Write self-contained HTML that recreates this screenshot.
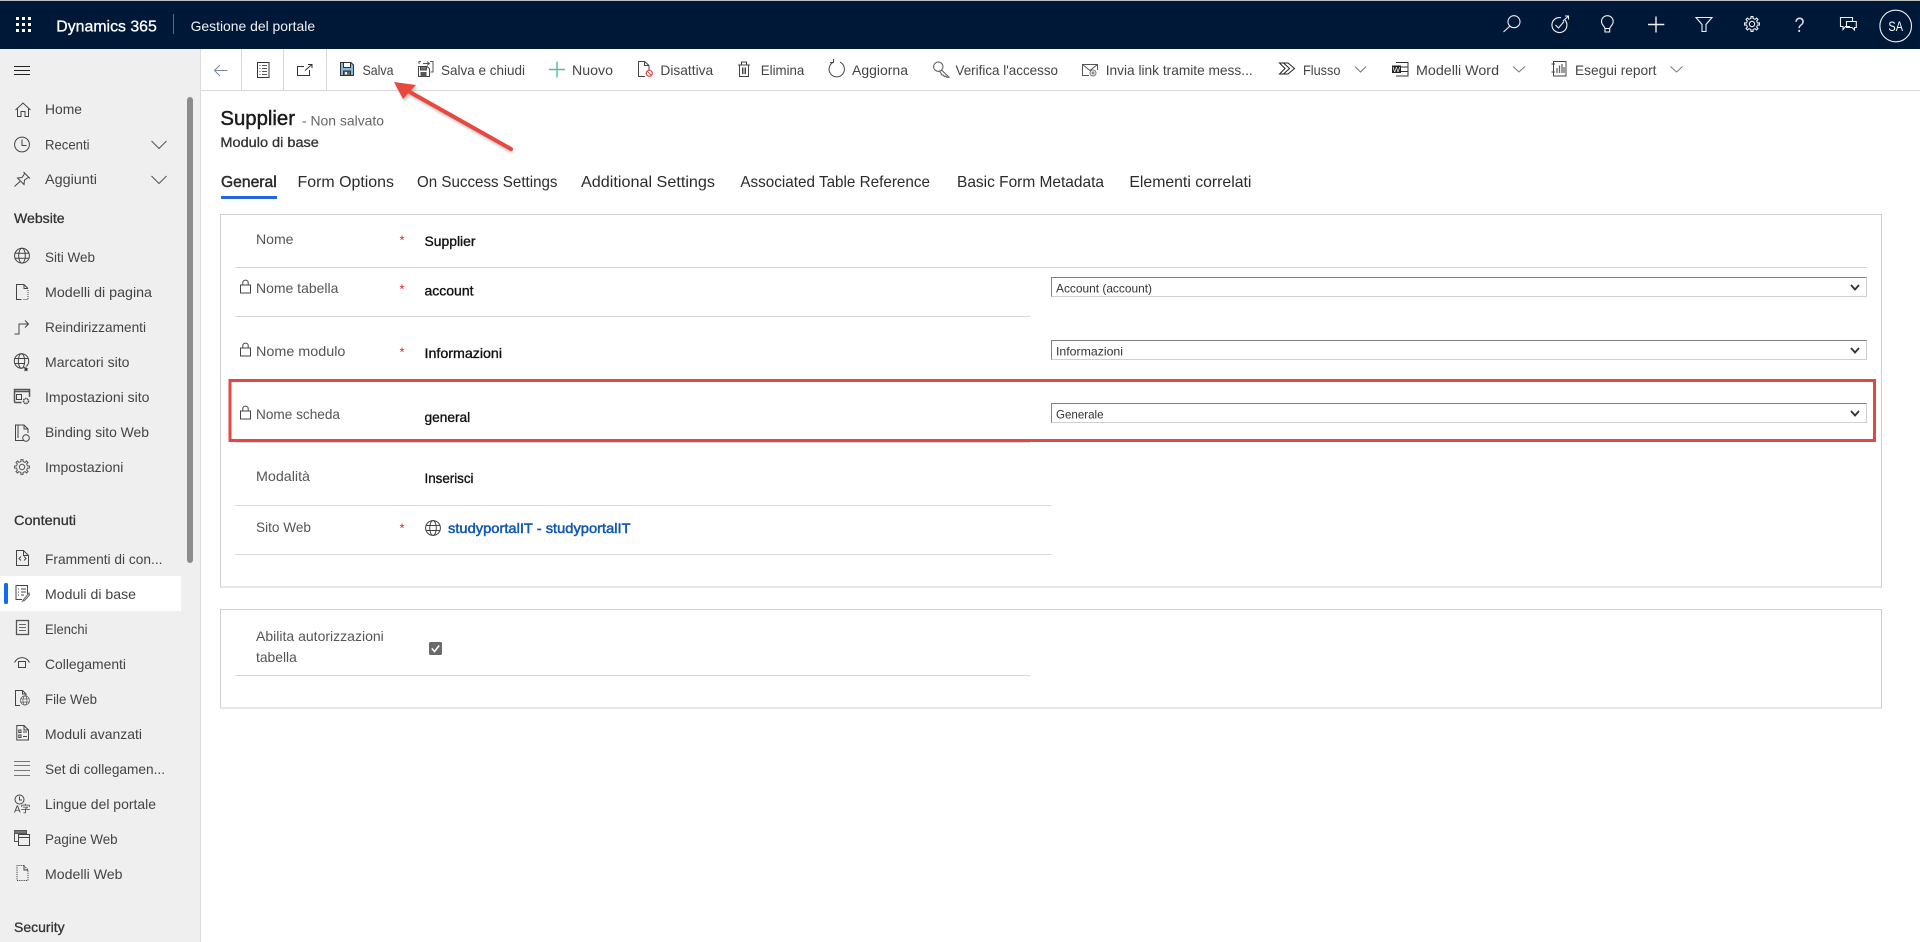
<!DOCTYPE html>
<html lang="it"><head><meta charset="utf-8"><title>Gestione del portale</title>
<style>
html,body{margin:0;padding:0;background:#fff;overflow:hidden}
svg{display:block}
text{font-family:"Liberation Sans",Arial,sans-serif;font-size:14px;fill:#3a3a3a}
.sb{stroke:currentColor;stroke-width:.3px}
.nav text{fill:#444}
.sec{fill:#333;color:#333;stroke:#333;stroke-width:.3px}
.tool text{fill:#444}
.tab{font-size:16px;fill:#2b2b2b}
.lab{fill:#555}
.val{fill:#111;color:#111;stroke:#111;stroke-width:.35px}
.sel{font-size:12px;fill:#333}
.star{fill:#e0202a;font-size:13px}
.i{fill:none;stroke:#444;stroke-width:1}
.w{fill:none;stroke:#f0f0f0;stroke-width:1.1}
</style></head><body>
<svg width="1920" height="942" viewBox="0 0 1920 942" xmlns="http://www.w3.org/2000/svg">
<defs>
<filter id="b" x="-20%" y="-20%" width="140%" height="140%"><feGaussianBlur stdDeviation="1.2"/></filter>
<path id="t" d="M5.9 2.92L6.93 2.5L6.96.57H9.04L9.07 2.5L10.1 2.92"/>
<g id="gear"><use href="#t"/><use href="#t" transform="rotate(45 8 8)"/><use href="#t" transform="rotate(90 8 8)"/><use href="#t" transform="rotate(135 8 8)"/><use href="#t" transform="rotate(180 8 8)"/><use href="#t" transform="rotate(225 8 8)"/><use href="#t" transform="rotate(270 8 8)"/><use href="#t" transform="rotate(315 8 8)"/><circle cx="8" cy="8" r="2.7"/></g>
<g id="globe"><circle cx="8" cy="8" r="7.4"/><ellipse cx="8" cy="8" rx="3.3" ry="7.4"/><path d="M.8 5.5H15.2M.8 10.5H15.2"/></g>
<path id="lock" d="M.5 5.5H10.5V13.5H.5ZM2.8 5.5V3.2C2.8-.2 8.2-.2 8.2 3.2V5.5"/>
</defs>

<!-- backgrounds -->
<rect width="1920" height="942" fill="#fff"/>
<rect y="0" width="1920" height="1" fill="#bdbdbd"/>
<rect y="1" width="1920" height="48" fill="#001838"/>
<rect y="49" width="200" height="893" fill="#efefef"/>
<rect x="200" y="49" width="1" height="893" fill="#dcdcdc"/>
<rect x="201" y="90" width="1719" height="1" fill="#d8d8d8"/>
<rect x="241" y="49" width="1" height="41" fill="#d8d8d8"/><rect x="283" y="49" width="1" height="41" fill="#d8d8d8"/><rect x="326" y="49" width="1" height="41" fill="#d8d8d8"/>

<!-- header -->
<g fill="#fff"><rect x="16" y="17" width="3" height="3"/><rect x="22" y="17" width="3" height="3"/><rect x="28" y="17" width="3" height="3"/><rect x="16" y="23" width="3" height="3"/><rect x="22" y="23" width="3" height="3"/><rect x="28" y="23" width="3" height="3"/><rect x="16" y="29" width="3" height="3"/><rect x="22" y="29" width="3" height="3"/><rect x="28" y="29" width="3" height="3"/></g>
<text x="56.3" y="31.5" font-size="16" style="font-size:16px;fill:#fff;color:#fff" class="sb" textLength="100.5" lengthAdjust="spacingAndGlyphs">Dynamics 365</text>
<rect x="173" y="14" width="1" height="20" fill="#5a6a80"/>
<text x="190.6" y="31" style="fill:#f2f2f2" textLength="124.5" lengthAdjust="spacingAndGlyphs">Gestione del portale</text>
<g class="w">
<circle cx="1514" cy="21.7" r="6"/><path d="M1510 26L1503.5 32"/>
<path d="M1565 20A7.5 7.5 0 1 1 1561 17.7"/><path d="M1555.5 25L1558.5 28L1564 21.5M1563 21L1568.5 16M1565 16H1568.5V19.5"/>
<path d="M1605 28.5C1604 25.5 1601.5 25 1601.5 21.5A5.8 5.8 0 0 1 1613.2 21.5C1613.2 25 1610.7 25.5 1609.7 28.5ZM1605 28.5V32H1609.7V28.5"/>
<path d="M1648 24.5H1664.3M1656 16.5V32.5" stroke-width="1.4"/>
<path d="M1696 17.5H1712L1706 24.5V31.5H1702V24.5Z"/>
<use href="#gear" transform="translate(1744,16)"/>
<path d="M1850 26.5H1845.5L1843 29.5V26.5H1840.5V17.5H1852.5V21M1846.5 21.5H1856.3V27.5H1854.5V30L1852 27.5H1846.5Z"/>
<circle cx="1895.7" cy="26" r="15.8"/>
</g>
<text x="1794.500" y="32" style="font-size:21px;fill:#d8dce2" textLength="10" lengthAdjust="spacingAndGlyphs">?</text>
<text x="1888.4" y="31" style="font-size:13.500px;fill:#fff" textLength="14.6" lengthAdjust="spacingAndGlyphs">SA</text>

<!-- sidebar -->
<path d="M14 66.5H30M14 70.5H30M14 74.5H30" stroke="#222" fill="none"/>
<rect x="187" y="97" width="6" height="466" rx="3" fill="#8c8c8c"/>
<rect x="0" y="576" width="181" height="35" fill="#fff"/>
<rect x="4" y="583" width="4" height="21" rx="1.5" fill="#0f6cf0"/>
<g class="nav">
<text x="45" y="114" textLength="37" lengthAdjust="spacingAndGlyphs">Home</text>
<text x="45" y="149.5" textLength="44.5" lengthAdjust="spacingAndGlyphs">Recenti</text>
<text x="45" y="184" textLength="52" lengthAdjust="spacingAndGlyphs">Aggiunti</text>
<text x="45" y="262" textLength="50" lengthAdjust="spacingAndGlyphs">Siti Web</text>
<text x="45" y="297" textLength="107" lengthAdjust="spacingAndGlyphs">Modelli di pagina</text>
<text x="45" y="332" textLength="101" lengthAdjust="spacingAndGlyphs">Reindirizzamenti</text>
<text x="45" y="367" textLength="84.5" lengthAdjust="spacingAndGlyphs">Marcatori sito</text>
<text x="45" y="402" textLength="104.5" lengthAdjust="spacingAndGlyphs">Impostazioni sito</text>
<text x="45" y="437" textLength="104" lengthAdjust="spacingAndGlyphs">Binding sito Web</text>
<text x="45" y="472" textLength="78.4" lengthAdjust="spacingAndGlyphs">Impostazioni</text>
<text x="45" y="564" textLength="117.5" lengthAdjust="spacingAndGlyphs">Frammenti di con...</text>
<text x="45" y="599" textLength="91" lengthAdjust="spacingAndGlyphs">Moduli di base</text>
<text x="45" y="634" textLength="42.5" lengthAdjust="spacingAndGlyphs">Elenchi</text>
<text x="45" y="669" textLength="81" lengthAdjust="spacingAndGlyphs">Collegamenti</text>
<text x="45" y="704" textLength="52" lengthAdjust="spacingAndGlyphs">File Web</text>
<text x="45" y="739" textLength="97" lengthAdjust="spacingAndGlyphs">Moduli avanzati</text>
<text x="45" y="774" textLength="120" lengthAdjust="spacingAndGlyphs">Set di collegamen...</text>
<text x="45" y="809" textLength="111" lengthAdjust="spacingAndGlyphs">Lingue del portale</text>
<text x="45" y="844" textLength="72.6" lengthAdjust="spacingAndGlyphs">Pagine Web</text>
<text x="45" y="879" textLength="77.5" lengthAdjust="spacingAndGlyphs">Modelli Web</text>
</g>
<text x="14" y="223" class="sec" textLength="50.6" lengthAdjust="spacingAndGlyphs">Website</text>
<text x="14" y="525" class="sec" textLength="62" lengthAdjust="spacingAndGlyphs">Contenuti</text>
<text x="14" y="932" class="sec" textLength="50.6" lengthAdjust="spacingAndGlyphs">Security</text>
<path d="M151.500 141L159 148.500L166.500 141M151.500 176L159 183.500L166.500 176" fill="none" stroke="#555"/>
<g class="i">
<path d="M15.500 110L23 103L30.500 110M17.500 108.500V116.500H21V111.500H25V116.500H28.500V108.500"/>
<circle cx="22" cy="144.500" r="7.400"/><path d="M22 139.500V145.500H26.500"/>
<path d="M23.500 172L30 178.500M25 173L22 177.500L17.500 178L24 184.500L24.500 180L29 177M20 181.500L14.500 186.500"/>
<use href="#globe" transform="translate(14,247.700)"/>
<path d="M24 284.500H16.500V299.500H21.500M24 284.500V288.500H28M24 284.500L28 288.500"/><path d="M28 290V299.500H23" stroke-dasharray="1 1"/>
<path d="M14.500 334H19V324H28M25 320.500L28.500 324L25 327.500"/>
<circle cx="21.500" cy="361" r="7.200"/><ellipse cx="21.500" cy="361" rx="3.200" ry="7.200"/><path d="M14.500 358.500H28.500M14.500 363.500H25"/>
<path d="M26 366L26.900 368.100L29.100 368.300L27.400 369.700L28 372L26 370.800L24 372L24.600 369.700L22.900 368.300L25.100 368.100Z" fill="#333" stroke="#efefef" stroke-width=".5"/>
<path d="M14.500 402.500V389.500H29.500V397M14.500 391.500H29.500M21.500 402.500H14.500" stroke="#555" stroke-width="1.500"/><rect x="16.500" y="394.500" width="5" height="5"/><circle cx="26" cy="401" r="2.500" stroke-width="1.500" stroke-dasharray="1.500 .6"/>
<path d="M23.500 440.500H15.500V425H24L28 429V433M24 425V429H28M18 425V438"/><circle cx="26" cy="438" r="3.300"/>
<use href="#gear" transform="translate(14,459)" stroke="#555"/>

<path d="M23.500 550.500H16.500V565.500H28.500V555.500ZM23.500 550.500V555.500H28.500M21 556.500L19 558.500L21 560.500M24 556.500L26 558.500L24 560.500"/>
<path d="M27.500 594V585.500H16V599.500H22M18 589H19M21 589H26M18 592H19M21 592H26M18 595H19M21 595H24" /><path d="M29 593L24 599L22.500 601L24.500 600.500L29.500 595Z" stroke="#666"/>
<rect x="16.500" y="620.500" width="12" height="14" stroke="#555" stroke-width="1.300"/><path d="M19 624.500H26M19 627.500H26M19 630.500H26" stroke="#666"/>
<path d="M14.500 662.500C18 656 26 656 29.500 662.500M18.500 661.500H25.500V667.500H18.500Z"/>
<path d="M20 705.500H15.500V690.500H22.500L26 694V696M22.500 690.500V694H26"/><g transform="translate(20,695.500) scale(.62)"><use href="#globe"/></g>
<path d="M16.800 725.500H24L28.500 730V740H16.800ZM24 725.500V730H28.500M18.800 730H21V732.500H18.800ZM18.800 735H21V737.500H18.800ZM23 732H27M23 736.500H27"/>
<path d="M14 761.500H30M14 765.500H30M14 770.500H30M14 775.500H30" stroke="#777"/>
<circle cx="19.500" cy="799.500" r="4.500"/><path d="M19.500 796.500V800H22"/>
<rect x="14.500" y="830.500" width="12" height="11" stroke="#555"/><rect x="14.500" y="830.500" width="12" height="3" fill="#777" stroke="#555"/><rect x="18.500" y="834.500" width="11" height="11" fill="#efefef"/><path d="M18.500 837.500H29.500"/>
<path d="M24 865.500V870H28" /><path d="M24 865.500H17V880.500H28V870L24 865.500" stroke-dasharray="1.200 1"/>
</g>
<text x="14" y="812.500" style="font-size:10px;fill:#444">A</text>
<text x="20.500" y="812.500" style="font-size:10px;fill:#444;font-family:'Liberation Sans','Noto Sans CJK SC',sans-serif">字</text>

<!-- command bar -->
<path d="M227.500 70.500H214.500M220 65L214.500 70.500L220 76" fill="none" stroke="#7d8794"/>
<g class="i">
<rect x="257.500" y="62.500" width="11.500" height="15" fill="none" stroke="#333"/>
<path d="M259.500 65.500H260.500M262 65.500H267M259.500 68.500H260.500M262 68.500H267M259.500 71.500H260.500M262 71.500H267M259.500 74.500H260.500M262 74.500H267" stroke="#555"/>
<path d="M304 66.500H297.500V75.500H309.500V70M305 70.500L312 64.500M308 64.500H312V68" stroke="#333"/>
</g>
<path d="M340.500 62.500H351L353.500 65V75.500H340.500Z" fill="#84b8e4" stroke="#333"/>
<rect x="343.500" y="62.500" width="7" height="5" fill="#fff" stroke="#333"/>
<rect x="343.500" y="71" width="7" height="4.500" fill="#666" stroke="#333"/><rect x="345" y="72" width="2" height="2.500" fill="#eee"/>
<path d="M418.500 66.500H427L429.500 68.500V76.500H418.500Z" fill="#fff" stroke="#444"/><rect x="420.500" y="66.500" width="6" height="3.500" fill="#777" stroke="#444"/><rect x="420.500" y="72" width="6" height="4.500" fill="#555"/>
<path d="M421 61.500H419V64M430 61.500H433V72H430.500M423 63.500H429M427 61.500L429.500 63.500L427 65.500" fill="none" stroke="#555"/>
<path d="M549 69.500H565M557 61.500V77.500" fill="none" stroke="#55bd93" stroke-width="1.400"/>
<g class="i">
<path d="M649 71V65.500L644.500 61.500H638.500V76.500H645M644.500 61.500V65.500H649"/>
<path d="M738 65H750M741.500 65V62H746.500V65M739.500 65V76.500H748.500V65M742.500 67.500V74M744 67.500V74M745.500 67.500V74"/>
<path d="M840 62.200A7.700 7.700 0 1 1 833.500 62.200M833.500 59V62.500H830"/>
<circle cx="938.300" cy="66.700" r="4.700" stroke="#555"/><path d="M941.500 70L949 77.200L947 77.500L945.500 76L944.500 76.500L943 75L942 75L939.500 71" stroke="#555"/>
<path d="M1089 75.500H1082.500V64.500H1097.500V70M1082.500 64.500L1090 70.500L1097.500 64.500" stroke="#555"/><circle cx="1093" cy="73" r="3" stroke="#777"/><circle cx="1093" cy="73" r="1" stroke="#777"/>
<path d="M1279.500 63H1288L1294.500 68.500L1288 74H1279.500L1285 68.500ZM1283.500 63L1289.500 68.500L1283.500 74" stroke="#222"/>
<path d="M1396 62.500H1408V76H1396M1396 67H1408M1396 71.500H1408" stroke="#333"/>
<path d="M1553.500 61.500H1566V76H1553.500ZM1551.500 64H1555M1551.500 72H1555" stroke="#444"/><path d="M1557 73V68M1559.500 73V65.500M1562 73V64M1564 73V67" stroke="#666" stroke-width="1.300"/>
<path d="M1355 66.500L1360.500 72L1366 66.500M1513 66.500L1519 72L1525 66.500M1670.500 66.500L1676.500 72L1682.500 66.500" stroke="#777"/>
</g>
<rect x="1392" y="65.500" width="9" height="7.500" fill="#222"/>
<text x="1392.700" y="71.800" style="font-size:7px;fill:#fff" textLength="7.500" lengthAdjust="spacingAndGlyphs">W</text>
<circle cx="649.300" cy="73.300" r="3" fill="#fff" stroke="#d9484a" stroke-width="1.200"/><path d="M647.300 71.300L651.300 75.300" stroke="#d9484a"/>
<g class="tool">
<text x="362.500" y="75" textLength="31" lengthAdjust="spacingAndGlyphs">Salva</text>
<text x="441" y="75" textLength="84" lengthAdjust="spacingAndGlyphs">Salva e chiudi</text>
<text x="572" y="75" textLength="41" lengthAdjust="spacingAndGlyphs">Nuovo</text>
<text x="660.400" y="75" textLength="52.800" lengthAdjust="spacingAndGlyphs">Disattiva</text>
<text x="760.800" y="75" textLength="43.500" lengthAdjust="spacingAndGlyphs">Elimina</text>
<text x="852" y="75" textLength="56" lengthAdjust="spacingAndGlyphs">Aggiorna</text>
<text x="955.500" y="75" textLength="102.500" lengthAdjust="spacingAndGlyphs">Verifica l'accesso</text>
<text x="1105.700" y="75" textLength="147" lengthAdjust="spacingAndGlyphs">Invia link tramite mess...</text>
<text x="1303" y="75" textLength="37.500" lengthAdjust="spacingAndGlyphs">Flusso</text>
<text x="1416" y="75" textLength="83" lengthAdjust="spacingAndGlyphs">Modelli Word</text>
<text x="1575" y="75" textLength="81.500" lengthAdjust="spacingAndGlyphs">Esegui report</text>
</g>

<!-- title -->
<text x="220.400" y="125" class="sb" style="font-size:20px;fill:#1a1a1a;color:#1a1a1a;stroke-width:.45px" textLength="74.600" lengthAdjust="spacingAndGlyphs">Supplier</text>
<text x="302" y="125.500" style="fill:#666" textLength="82" lengthAdjust="spacingAndGlyphs">- Non salvato</text>
<text x="220.400" y="147" class="sb" style="font-size:13.500px;fill:#333;color:#333" textLength="98.500" lengthAdjust="spacingAndGlyphs">Modulo di base</text>

<!-- tabs -->
<text x="221" y="187" class="tab sb" style="color:#222;stroke-width:.4px" textLength="55.700" lengthAdjust="spacingAndGlyphs">General</text>
<text x="297.500" y="187" class="tab" textLength="96.500" lengthAdjust="spacingAndGlyphs">Form Options</text>
<text x="417" y="187" class="tab" textLength="140.500" lengthAdjust="spacingAndGlyphs">On Success Settings</text>
<text x="581" y="187" class="tab" textLength="134" lengthAdjust="spacingAndGlyphs">Additional Settings</text>
<text x="740.400" y="187" class="tab" textLength="189.600" lengthAdjust="spacingAndGlyphs">Associated Table Reference</text>
<text x="957" y="187" class="tab" textLength="147" lengthAdjust="spacingAndGlyphs">Basic Form Metadata</text>
<text x="1129.400" y="187" class="tab" textLength="122" lengthAdjust="spacingAndGlyphs">Elementi correlati</text>
<rect x="221" y="196" width="56" height="3" fill="#2266e3"/>

<!-- section 1 -->
<rect x="220.500" y="214.500" width="1661" height="372.500" fill="#fff" stroke="#cfcfcf"/>
<g fill="#d8d8d8">
<rect x="235" y="267" width="1632" height="1"/>
<rect x="235" y="316" width="795" height="1"/>
<rect x="235" y="442" width="795" height="1"/>
<rect x="235" y="505" width="816" height="1"/>
<rect x="235" y="554" width="816" height="1"/>
</g>
<g>
<text x="256" y="244" class="lab" textLength="37.500" lengthAdjust="spacingAndGlyphs">Nome</text>
<text x="256" y="293" class="lab" textLength="82.400" lengthAdjust="spacingAndGlyphs">Nome tabella</text>
<text x="256" y="356" class="lab" textLength="89.400" lengthAdjust="spacingAndGlyphs">Nome modulo</text>
<text x="256" y="419" class="lab" textLength="84" lengthAdjust="spacingAndGlyphs">Nome scheda</text>
<text x="256" y="481" class="lab" textLength="54" lengthAdjust="spacingAndGlyphs">Modalità</text>
<text x="256" y="532" class="lab" textLength="55" lengthAdjust="spacingAndGlyphs">Sito Web</text>
</g>
<g class="i" stroke="#555">
<use href="#lock" transform="translate(240,279.500)"/>
<use href="#lock" transform="translate(240,342.500)"/>
<use href="#lock" transform="translate(240,405.500)"/>
</g>
<text x="399.500" y="244.500" class="star">*</text>
<text x="399.500" y="293.500" class="star">*</text>
<text x="399.500" y="356.500" class="star">*</text>
<text x="399.500" y="532.500" class="star">*</text>
<text x="424.500" y="246" class="val" textLength="51" lengthAdjust="spacingAndGlyphs">Supplier</text>
<text x="424.500" y="295.500" class="val" textLength="49" lengthAdjust="spacingAndGlyphs">account</text>
<text x="424.500" y="358" class="val" textLength="77.500" lengthAdjust="spacingAndGlyphs">Informazioni</text>
<text x="424.500" y="422" class="val" textLength="45.700" lengthAdjust="spacingAndGlyphs">general</text>
<text x="424.500" y="483" class="val" textLength="49" lengthAdjust="spacingAndGlyphs">Inserisci</text>
<g class="i" stroke="#222"><use href="#globe" transform="translate(425,520)"/></g>
<text x="448" y="533" class="sb" style="fill:#1159b0;color:#1159b0;stroke-width:.5px" textLength="182.600" lengthAdjust="spacingAndGlyphs">studyportalIT - studyportalIT</text>

<!-- selects -->
<g fill="#fff" stroke="#cfcfcf">
<rect x="1051.500" y="277.500" width="815" height="19"/>
<rect x="1051.500" y="340.500" width="815" height="19"/>
<rect x="1051.500" y="403.500" width="815" height="19"/>
</g>
<path d="M1051.500 296.500V277.500H1866.500M1051.500 359.500V340.500H1866.500M1051.500 422.500V403.500H1866.500" fill="none" stroke="#808080"/>
<path d="M1851 285L1855 289.500L1859 285M1851 348L1855 352.500L1859 348M1851 411L1855 415.500L1859 411" fill="none" stroke="#333" stroke-width="1.800"/>
<text x="1056" y="292.500" class="sel" textLength="96" lengthAdjust="spacingAndGlyphs">Account (account)</text>
<text x="1056" y="355.500" class="sel" textLength="67" lengthAdjust="spacingAndGlyphs">Informazioni</text>
<text x="1056" y="418.500" class="sel" textLength="47.500" lengthAdjust="spacingAndGlyphs">Generale</text>

<!-- section 2 -->
<rect x="220.500" y="609.500" width="1661" height="98.500" fill="#fff" stroke="#cfcfcf"/>
<rect x="235" y="675" width="795" height="1" fill="#d8d8d8"/>
<text x="256" y="641" class="lab" textLength="127.800" lengthAdjust="spacingAndGlyphs">Abilita autorizzazioni</text>
<text x="256" y="662" class="lab" textLength="40.800" lengthAdjust="spacingAndGlyphs">tabella</text>
<rect x="429" y="642" width="13" height="13" rx="1.500" fill="#6a6a6a"/>
<path d="M431.800 648.500L434.500 651.500L439.200 645.500" fill="none" stroke="#fff" stroke-width="1.600"/>

<!-- red highlight -->
<rect x="230" y="380.500" width="1644.500" height="60" fill="none" stroke="#e84545" stroke-width="3"/>

<!-- arrow -->
<g opacity=".35" filter="url(#b)" transform="translate(1.500,2.500)"><path d="M408 91L511 149" stroke="#555" stroke-width="4" fill="none"/><path d="M394 82L416 85L403 99Z" fill="#555"/></g>
<path d="M408 91L511 149" stroke="#e8483f" stroke-width="4" stroke-linecap="round" fill="none"/>
<path d="M394 82L416 85L403 99Z" fill="#e8483f"/>
</svg>
</body></html>
